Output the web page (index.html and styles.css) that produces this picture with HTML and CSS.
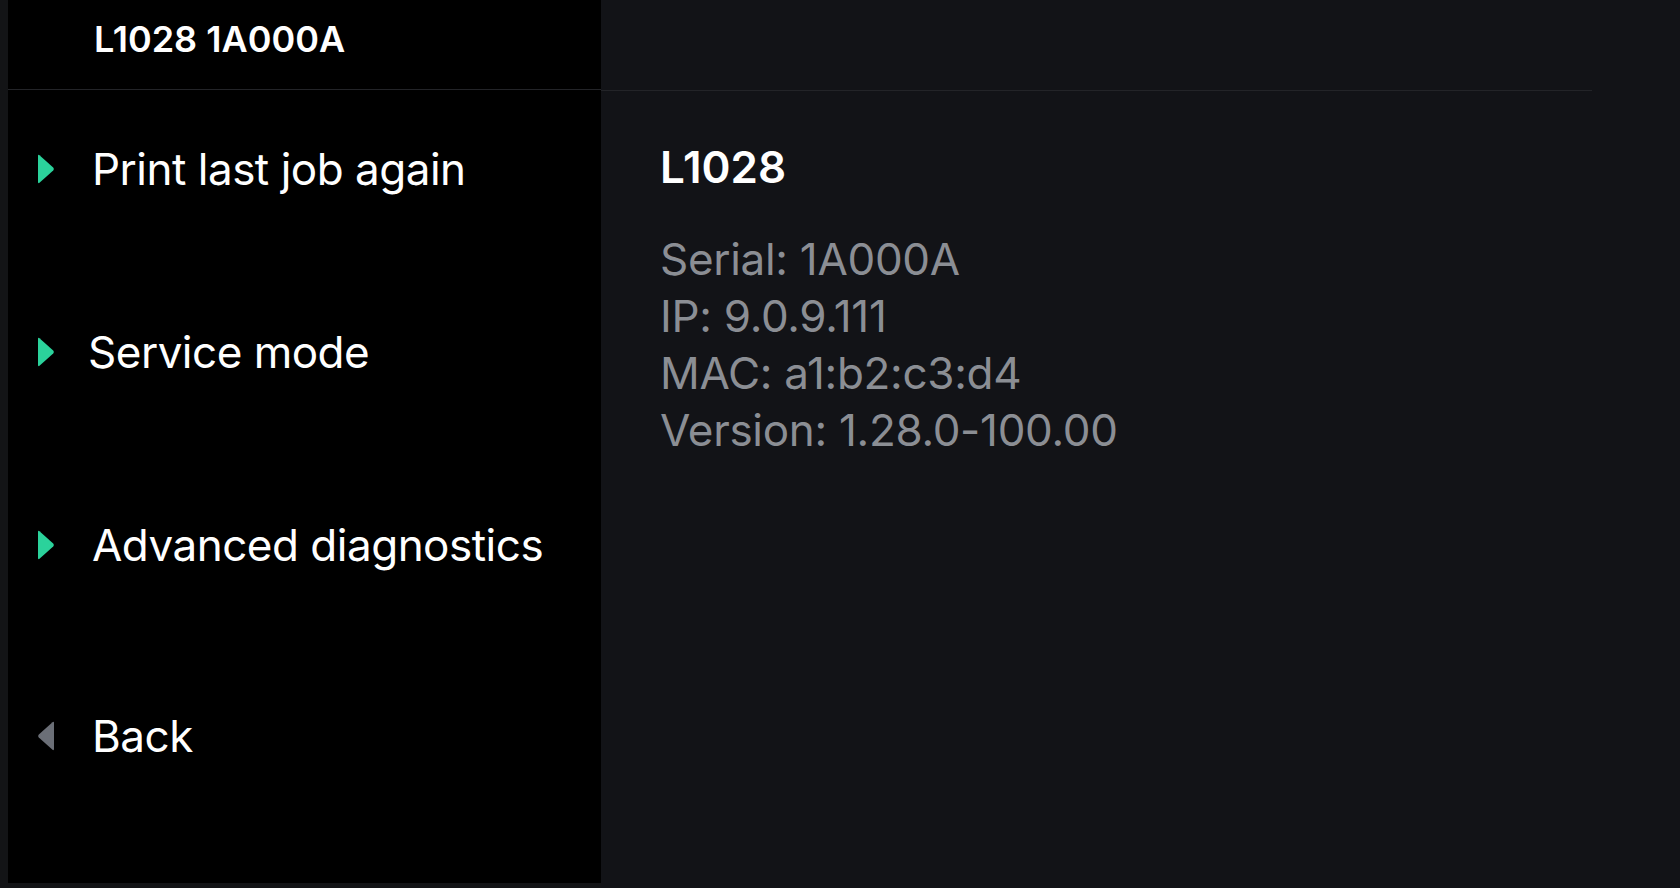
FILE: index.html
```html
<!DOCTYPE html>
<html lang="en">
<head>
    <meta charset="UTF-8">
    <title>L1028 1A000A</title>
    <link rel="stylesheet" href="styles.css">
</head>
<body>
<div class="screen">
    <aside class="sidebar">
        <div class="sidebar-header">L1028 1A000A</div>

        <ul class="menu">
            <li class="menu-item">
                <svg class="arrow" viewBox="0 0 16 30"><path d="M1.5 1.2 L15.2 13.6 Q16.4 15 15.2 16.4 L1.5 28.8 Q0 29.8 0 28 V2 Q0 0.2 1.5 1.2 Z"/></svg>
                <span>Print last job again</span>
            </li>
            <li class="menu-item service">
                <svg class="arrow" viewBox="0 0 16 30"><path d="M1.5 1.2 L15.2 13.6 Q16.4 15 15.2 16.4 L1.5 28.8 Q0 29.8 0 28 V2 Q0 0.2 1.5 1.2 Z"/></svg>
                <span>Service mode</span>
            </li>
            <li class="menu-item diagnostics">
                <svg class="arrow" viewBox="0 0 16 30"><path d="M1.5 1.2 L15.2 13.6 Q16.4 15 15.2 16.4 L1.5 28.8 Q0 29.8 0 28 V2 Q0 0.2 1.5 1.2 Z"/></svg>
                <span>Advanced diagnostics</span>
            </li>
            <li class="menu-item back">
                <svg class="arrow" viewBox="0 0 16 30"><path d="M14.5 1.2 L0.8 13.6 Q-0.4 15 0.8 16.4 L14.5 28.8 Q16 29.8 16 28 V2 Q16 0.2 14.5 1.2 Z"/></svg>
                <span>Back</span>
            </li>
        </ul>
    </aside>

    <main class="details">
        <div class="details-header"></div>
        <div class="details-body">
            <h2>L1028</h2>
            <p>Serial: 1A000A</p>
            <p>IP: 9.0.9.111</p>
            <p>MAC: a1:b2:c3:d4</p>
            <p>Version: 1.28.0-100.00</p>
        </div>
    </main>
</div>
</body>
</html>
```

FILE: styles.css
```css
body {
    margin: 0;
    background-color: #121317;
    font-family: 'Inter', 'Noto Sans', sans-serif;
    color: #ffffff;
    overflow: hidden;
}

.screen {
    display: flex;
    height: 888px;
    padding-left: 8px;
    background-color: #131416;
    box-sizing: border-box;
}

/* Left menu */
.sidebar {
    width: 593px;
    height: 883px;
    background-color: #000000;
    flex-shrink: 0;
}

.sidebar-header {
    height: 90px;
    box-sizing: border-box;
    padding: 21px 0 0 86px;
    font-size: 36px;
    line-height: 36px;
    font-weight: 600;
    border-bottom: 1px solid #232428;
}

.menu {
    list-style: none;
    margin: 0;
    padding: 49px 0 0 0;
    display: flex;
    flex-direction: column;
    gap: 128px;
}

.menu-item {
    display: flex;
    align-items: center;
    height: 60px;
    padding-left: 30px;
    font-size: 44px;
    line-height: 60px;
    letter-spacing: -0.5px;
}

.menu-item.service {
    margin-top: -5px;
}

.menu-item.service .arrow {
    margin-right: 34px;
}

.menu-item.diagnostics {
    margin-top: 5px;
}

.menu-item.back {
    margin-top: 3px;
}

.arrow {
    width: 16px;
    height: 30px;
    margin-right: 38px;
    fill: #2bd29b;
}

.back .arrow {
    fill: #6b6f77;
}

/* Right panel */
.details {
    flex: 1;
    background-color: #121317;
}

.details-header {
    height: 90px;
    margin-right: 88px;
    border-bottom: 1px solid #232428;
}

.details-body {
    padding: 50px 0 0 59px;
}

h2 {
    margin: 0 0 38px 0;
    font-size: 44px;
    line-height: 52px;
    font-weight: 600;
}

p {
    margin: 0;
    font-size: 44px;
    line-height: 57px;
    letter-spacing: -0.3px;
    color: #8b8e94;
}
```
